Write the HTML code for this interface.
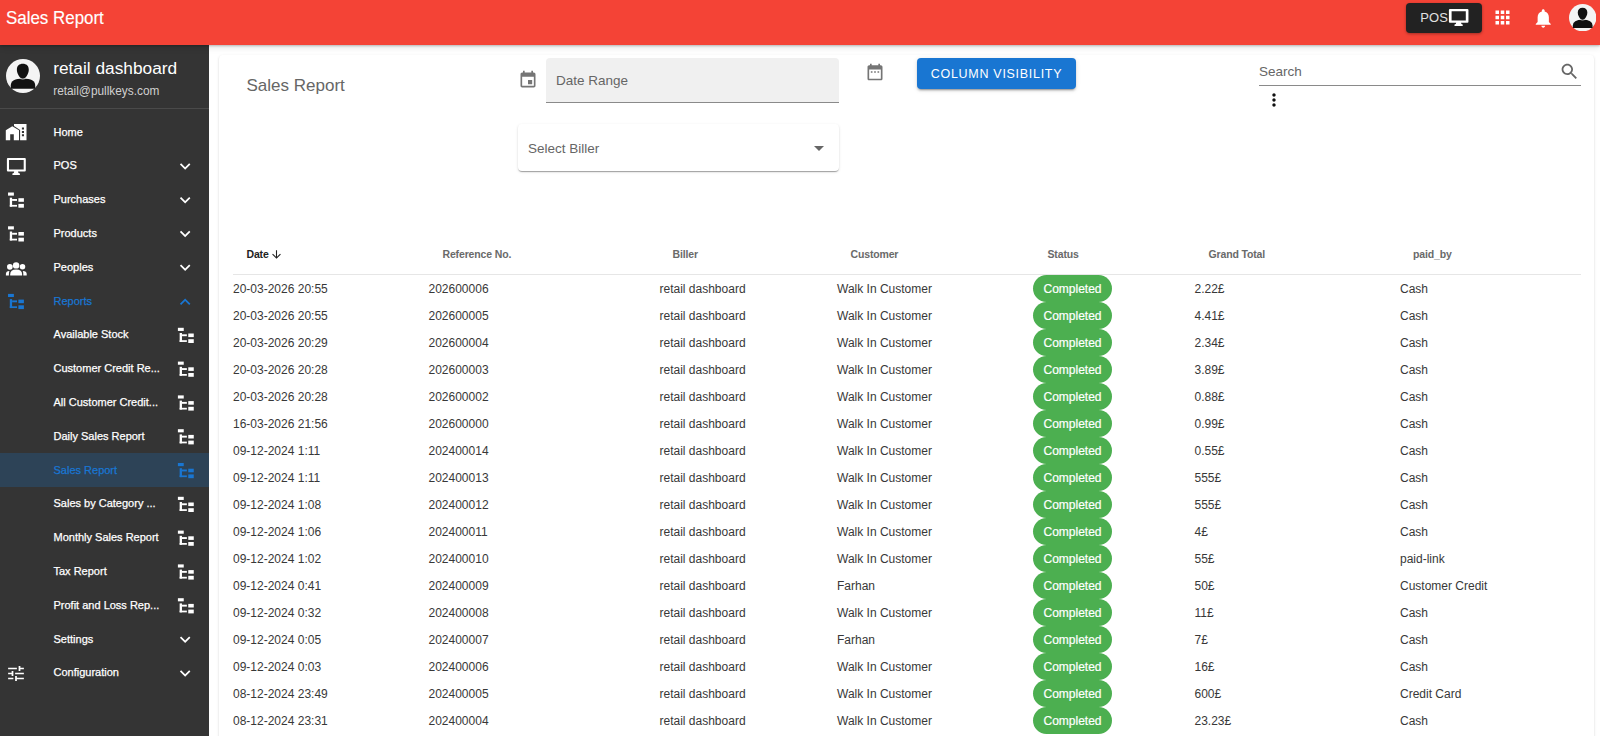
<!DOCTYPE html>
<html><head><meta charset="utf-8"><style>
*{box-sizing:border-box;}
html,body{margin:0;padding:0;}
body{width:1600px;height:736px;overflow:hidden;position:relative;background:#fff;font-family:"Liberation Sans",sans-serif;}
.abs{position:absolute;}
#top{position:absolute;left:0;top:0;width:1600px;height:44.5px;background:#f44336;z-index:5;box-shadow:0 1px 2px rgba(0,0,0,0.22),0 3px 6px rgba(0,0,0,0.1);}
#top .title{position:absolute;left:5.5px;top:1px;line-height:35px;font-size:18px;color:#fff;white-space:nowrap;transform:scaleX(0.94);transform-origin:0 0;-webkit-text-stroke:0.15px #fff;}
#posbtn{position:absolute;left:1405.5px;top:2.5px;width:76.5px;height:30.5px;background:#222;border-radius:4px;box-shadow:0 1px 3px rgba(0,0,0,0.35);}
#posbtn .t{position:absolute;left:14.8px;top:-3px;line-height:35px;font-size:13px;color:#e0e0e0;letter-spacing:0.1px;}
#side{position:absolute;left:0;top:44px;width:209px;height:692px;background:#343434;}
#paper{position:absolute;left:219px;top:55px;width:1375px;height:800px;background:#fff;border-radius:4px;box-shadow:0 2px 1px -1px rgba(0,0,0,0.2),0 1px 1px 0 rgba(0,0,0,0.14),0 1px 3px 0 rgba(0,0,0,0.12);}
.sel{position:absolute;left:0;width:209px;background:#2d4357;}
.lbl{position:absolute;left:53.5px;height:33.8px;line-height:33.8px;font-size:11px;color:#fff;white-space:nowrap;z-index:3;-webkit-text-stroke:0.25px #fff;}
.lbl.act{-webkit-text-stroke:0.25px #1976d2;}
.lbl.act{color:#1976d2;}
.row{position:absolute;left:0;width:1600px;height:27px;}
.row .c{position:absolute;top:0.6px;line-height:27px;font-size:12px;color:#383838;white-space:nowrap;}
.chip{position:absolute;left:1033px;top:0;width:79px;height:27px;border-radius:13.5px;background:#4caf50;color:#fff;font-size:12px;line-height:28.5px;text-align:center;-webkit-text-stroke:0.2px #fff;}
.hd{position:absolute;top:244px;line-height:21px;font-size:10.5px;font-weight:700;letter-spacing:-0.15px;color:#6a6a6a;white-space:nowrap;}
</style></head><body>
<div id="top">
  <div class="title">Sales Report</div>
  <div id="posbtn"><span class="t">POS</span>
    <svg class="abs" style="left:-1405.5px;top:-2.5px" width="1600" height="40" fill="#fff"><path fill-rule="evenodd" d="M1449.9 8.9 H1467.45 Q1468.45 8.9 1468.45 9.9 V21.8 Q1468.45 22.8 1467.45 22.8 H1449.9 Q1448.9 22.8 1448.9 21.8 V9.9 Q1448.9 8.9 1449.9 8.9z M1451.6 11.3 V20.5 H1465.8 V11.3z M1456.2 22.8 H1461 Q1461 24.5 1462.7 24.5 V25.9 H1454.5 V24.5 Q1456.2 24.5 1456.2 22.8z"/></svg>
  </div>
  <svg class="abs" style="left:1492px;top:7.4px" width="21" height="21" viewBox="0 0 24 24" fill="#fff"><path d="M4 8h4V4H4v4zm6 12h4v-4h-4v4zm-6 0h4v-4H4v4zm0-6h4v-4H4v4zm6 0h4v-4h-4v4zm6-10v4h4V4h-4zm-6 4h4V4h-4v4zm6 6h4v-4h-4v4zm0 6h4v-4h-4v4z"/></svg>
  <svg class="abs" style="left:1531.8px;top:6.6px" width="22.5" height="22.5" viewBox="0 0 24 24" fill="#fff"><path d="M12 22c1.1 0 2-.9 2-2h-4c0 1.1.89 2 2 2zm6-6v-5c0-3.07-1.64-5.64-4.5-6.32V4c0-.83-.67-1.5-1.5-1.5s-1.5.67-1.5 1.5v.68C7.63 5.36 6 7.92 6 11v5l-2 2v1h16v-1l-2-2z"/></svg>
  <svg class="abs" style="left:1568.7px;top:3.7px" width="27.4" height="27.4" viewBox="0 0 100 100"><circle cx="50" cy="50" r="50" fill="#f4f4f4"/><g fill="#111"><path d="M49.5 14 C60 14 67 20 67 31 C67 37 65.5 42 63 46 C60 52 56 57.5 49.5 57.5 C43 57.5 39 52 36 46 C33.5 42 32 37 32 31 C32 20 39 14 49.5 14z"/><path d="M14 87.4 V78.5 Q14 57.5 50 57.5 Q86 57.5 86 78.5 V87.4z"/></g><path d="M42 57.8 Q49.5 61.5 57 57.8" stroke="#f4f4f4" stroke-width="1.6" fill="none"/></svg>
</div>
<div id="side">
  <svg class="abs" style="left:6px;top:15px" width="34" height="34" viewBox="0 0 100 100"><circle cx="50" cy="50" r="50" fill="#f4f4f4"/><g fill="#111"><path d="M49.5 14 C60 14 67 20 67 31 C67 37 65.5 42 63 46 C60 52 56 57.5 49.5 57.5 C43 57.5 39 52 36 46 C33.5 42 32 37 32 31 C32 20 39 14 49.5 14z"/><path d="M14 87.4 V78.5 Q14 57.5 50 57.5 Q86 57.5 86 78.5 V87.4z"/></g><path d="M42 57.8 Q49.5 61.5 57 57.8" stroke="#f4f4f4" stroke-width="1.6" fill="none"/></svg>
  <div class="abs" style="left:53.2px;top:14px;font-size:17.3px;line-height:20px;color:#fff;white-space:nowrap">retail dashboard</div>
  <div class="abs" style="left:53.2px;top:40px;font-size:11.85px;line-height:15px;color:#d0d0d0;white-space:nowrap">retail@pullkeys.com</div>
  <div class="abs" style="left:0;top:64px;width:209px;height:1px;background:#4a4a4a"></div>
</div>
<div class="sel" style="top:453.00px;height:33.8px;z-index:2"></div>
<svg class="abs" style="left:0;top:0;z-index:3" width="209" height="736" fill="#fff"><path d="M5.8 130.3 L12.27 126.3 L19.0 130.3 V140.2 H13.8 V134.3 H10.2 V140.2 H5.8z"/><path fill-rule="evenodd" d="M14 123.9 H26.5 V140.2 H20.1 V129.9 L14 126.0z M21.9 127.6 h2.1 v2 h-2.1z M21.9 131 h2.1 v2 h-2.1z M21.9 134.3 h2.1 v2 h-2.1z"/><path fill-rule="evenodd" d="M7.9 157.9 H24.8 Q25.8 157.9 25.8 158.9 V170.4 Q25.8 171.4 24.8 171.4 H7.9 Q6.9 171.4 6.9 170.4 V158.9 Q6.9 157.9 7.9 157.9z M9 160 V169.4 H23.7 V160z M14.2 171.4 H18 Q18 173.4 19.9 173.4 V175 H12.4 V173.4 Q14.2 173.4 14.2 171.4z"/><rect x="8.04" y="192.50" width="5.84" height="3.14"/><rect x="9.80" y="197.70" width="2.3" height="8.95"/><rect x="12.10" y="199.00" width="4.9" height="1.9"/><rect x="9.80" y="204.90" width="7.2" height="1.75"/><rect x="18.40" y="198.20" width="5.5" height="3.6"/><rect x="18.40" y="203.90" width="5.5" height="3.8"/><rect x="8.04" y="226.30" width="5.84" height="3.14"/><rect x="9.80" y="231.50" width="2.3" height="8.95"/><rect x="12.10" y="232.80" width="4.9" height="1.9"/><rect x="9.80" y="238.70" width="7.2" height="1.75"/><rect x="18.40" y="232.00" width="5.5" height="3.6"/><rect x="18.40" y="237.70" width="5.5" height="3.8"/><g fill="#1976d2"><rect x="8.04" y="293.90" width="5.84" height="3.14"/><rect x="9.80" y="299.10" width="2.3" height="8.95"/><rect x="12.10" y="300.40" width="4.9" height="1.9"/><rect x="9.80" y="306.30" width="7.2" height="1.75"/><rect x="18.40" y="299.60" width="5.5" height="3.6"/><rect x="18.40" y="305.30" width="5.5" height="3.8"/></g><g><rect x="177.90" y="327.80" width="5.84" height="3.14"/><rect x="179.66" y="333.00" width="2.3" height="8.95"/><rect x="181.96" y="334.30" width="4.9" height="1.9"/><rect x="179.66" y="340.20" width="7.2" height="1.75"/><rect x="188.26" y="333.50" width="5.5" height="3.6"/><rect x="188.26" y="339.20" width="5.5" height="3.8"/></g><g><rect x="177.90" y="361.60" width="5.84" height="3.14"/><rect x="179.66" y="366.80" width="2.3" height="8.95"/><rect x="181.96" y="368.10" width="4.9" height="1.9"/><rect x="179.66" y="374.00" width="7.2" height="1.75"/><rect x="188.26" y="367.30" width="5.5" height="3.6"/><rect x="188.26" y="373.00" width="5.5" height="3.8"/></g><g><rect x="177.90" y="395.40" width="5.84" height="3.14"/><rect x="179.66" y="400.60" width="2.3" height="8.95"/><rect x="181.96" y="401.90" width="4.9" height="1.9"/><rect x="179.66" y="407.80" width="7.2" height="1.75"/><rect x="188.26" y="401.10" width="5.5" height="3.6"/><rect x="188.26" y="406.80" width="5.5" height="3.8"/></g><g><rect x="177.90" y="429.20" width="5.84" height="3.14"/><rect x="179.66" y="434.40" width="2.3" height="8.95"/><rect x="181.96" y="435.70" width="4.9" height="1.9"/><rect x="179.66" y="441.60" width="7.2" height="1.75"/><rect x="188.26" y="434.90" width="5.5" height="3.6"/><rect x="188.26" y="440.60" width="5.5" height="3.8"/></g><g fill="#1976d2"><rect x="177.90" y="463.00" width="5.84" height="3.14"/><rect x="179.66" y="468.20" width="2.3" height="8.95"/><rect x="181.96" y="469.50" width="4.9" height="1.9"/><rect x="179.66" y="475.40" width="7.2" height="1.75"/><rect x="188.26" y="468.70" width="5.5" height="3.6"/><rect x="188.26" y="474.40" width="5.5" height="3.8"/></g><g><rect x="177.90" y="496.80" width="5.84" height="3.14"/><rect x="179.66" y="502.00" width="2.3" height="8.95"/><rect x="181.96" y="503.30" width="4.9" height="1.9"/><rect x="179.66" y="509.20" width="7.2" height="1.75"/><rect x="188.26" y="502.50" width="5.5" height="3.6"/><rect x="188.26" y="508.20" width="5.5" height="3.8"/></g><g><rect x="177.90" y="530.60" width="5.84" height="3.14"/><rect x="179.66" y="535.80" width="2.3" height="8.95"/><rect x="181.96" y="537.10" width="4.9" height="1.9"/><rect x="179.66" y="543.00" width="7.2" height="1.75"/><rect x="188.26" y="536.30" width="5.5" height="3.6"/><rect x="188.26" y="542.00" width="5.5" height="3.8"/></g><g><rect x="177.90" y="564.40" width="5.84" height="3.14"/><rect x="179.66" y="569.60" width="2.3" height="8.95"/><rect x="181.96" y="570.90" width="4.9" height="1.9"/><rect x="179.66" y="576.80" width="7.2" height="1.75"/><rect x="188.26" y="570.10" width="5.5" height="3.6"/><rect x="188.26" y="575.80" width="5.5" height="3.8"/></g><g><rect x="177.90" y="598.20" width="5.84" height="3.14"/><rect x="179.66" y="603.40" width="2.3" height="8.95"/><rect x="181.96" y="604.70" width="4.9" height="1.9"/><rect x="179.66" y="610.60" width="7.2" height="1.75"/><rect x="188.26" y="603.90" width="5.5" height="3.6"/><rect x="188.26" y="609.60" width="5.5" height="3.8"/></g><g transform="translate(0,250.90)"><circle cx="16.1" cy="14.5" r="3.2"/><circle cx="9.85" cy="15.9" r="2.85"/><circle cx="22.5" cy="15.9" r="2.75"/><path d="M10.2 24.6 V23.6 Q10.2 18.6 16.15 18.6 Q22.1 18.6 22.1 23.6 V24.6z"/><path d="M5.9 24.6 V22.8 Q5.9 20.2 9.4 20.0 Q8.9 21.4 8.9 23.2 V24.6z"/><path d="M23.3 24.6 V23.2 Q23.3 21.4 22.8 20.0 Q26.7 20.2 26.7 22.8 V24.6z"/></g><path transform="translate(5.5,663.50) scale(0.8750,0.8333)" d="M3 17v2h6v-2H3zM3 5v2h10V5H3zm10 16v-2h8v-2h-8v-2h-2v6h2zM7 9v2H3v2h4v2h2V9H7zm14 4v-2H11v2h10zm-6-4h2V7h4V5h-4V3h-2v6z"/><path fill="#fff" transform="translate(174.65,155.68) scale(0.8750)" d="M16.59 8.59 12 13.17 7.41 8.59 6 10l6 6 6-6z"/><path fill="#fff" transform="translate(174.65,189.48) scale(0.8750)" d="M16.59 8.59 12 13.17 7.41 8.59 6 10l6 6 6-6z"/><path fill="#fff" transform="translate(174.65,223.28) scale(0.8750)" d="M16.59 8.59 12 13.17 7.41 8.59 6 10l6 6 6-6z"/><path fill="#fff" transform="translate(174.65,257.08) scale(0.8750)" d="M16.59 8.59 12 13.17 7.41 8.59 6 10l6 6 6-6z"/><path fill="#1976d2" transform="translate(174.65,291.40) scale(0.8750)" d="M12 8l-6 6 1.41 1.41L12 10.83l4.59 4.58L18 14z"/><path fill="#fff" transform="translate(174.65,628.88) scale(0.8750)" d="M16.59 8.59 12 13.17 7.41 8.59 6 10l6 6 6-6z"/><path fill="#fff" transform="translate(174.65,662.68) scale(0.8750)" d="M16.59 8.59 12 13.17 7.41 8.59 6 10l6 6 6-6z"/></svg>
<div class="abs" style="left:0;top:0;width:209px;height:736px;z-index:3">
<div class="lbl" style="top:115.60px">Home</div>
<div class="lbl" style="top:149.40px">POS</div>
<div class="lbl" style="top:183.20px">Purchases</div>
<div class="lbl" style="top:217.00px">Products</div>
<div class="lbl" style="top:250.80px">Peoples</div>
<div class="lbl act" style="top:284.60px">Reports</div>
<div class="lbl" style="top:318.40px">Available Stock</div>
<div class="lbl" style="top:352.20px">Customer Credit Re...</div>
<div class="lbl" style="top:386.00px">All Customer Credit...</div>
<div class="lbl" style="top:419.80px">Daily Sales Report</div>
<div class="lbl act" style="top:453.60px">Sales Report</div>
<div class="lbl" style="top:487.40px">Sales by Category ...</div>
<div class="lbl" style="top:521.20px">Monthly Sales Report</div>
<div class="lbl" style="top:555.00px">Tax Report</div>
<div class="lbl" style="top:588.80px">Profit and Loss Rep...</div>
<div class="lbl" style="top:622.60px">Settings</div>
<div class="lbl" style="top:656.40px">Configuration</div>
</div>
<div id="paper"></div>
<div class="abs" style="left:0;top:0;width:1600px;height:736px;z-index:2">
  <div class="abs" style="left:246.5px;top:74.5px;font-size:17px;line-height:22px;color:#666;white-space:nowrap">Sales Report</div>
  <svg class="abs" style="left:517.7px;top:70.1px" width="20" height="20" viewBox="0 0 24 24" fill="#757575"><path d="M17 12h-5v5h5v-5zM16 1v2H8V1H6v2H5c-1.11 0-1.99.9-1.99 2L3 19c0 1.1.89 2 2 2h14c1.1 0 2-.9 2-2V5c0-1.1-.9-2-2-2h-1V1h-2zm3 18H5V8h14v11z"/></svg>
  <div class="abs" style="left:545.75px;top:58.25px;width:293.5px;height:44.25px;background:#f0f0f0;border-radius:4px 4px 0 0;border-bottom:1px solid #8a8a8a"></div>
  <div class="abs" style="left:556px;top:70.5px;font-size:13.5px;line-height:20px;color:#666;white-space:nowrap">Date Range</div>
  <div class="abs" style="left:518px;top:123.75px;width:321.25px;height:47.5px;background:#fff;border-radius:4px;box-shadow:0 2px 1px -1px rgba(0,0,0,0.2),0 1px 1px 0 rgba(0,0,0,0.14),0 1px 3px 0 rgba(0,0,0,0.12)"></div>
  <div class="abs" style="left:528px;top:138.6px;font-size:13.5px;line-height:20px;color:#666;white-space:nowrap">Select Biller</div>
  <svg class="abs" style="left:807px;top:136px" width="24" height="24" viewBox="0 0 24 24" fill="#666"><path d="M7 10l5 5 5-5z"/></svg>
  <svg class="abs" style="left:865px;top:62.4px" width="20" height="20" viewBox="0 0 24 24" fill="#757575"><path d="M9 11H7v2h2v-2zm4 0h-2v2h2v-2zm4 0h-2v2h2v-2zm2-7h-1V2h-2v2H8V2H6v2H5c-1.11 0-1.99.9-1.99 2L3 20c0 1.1.89 2 2 2h14c1.1 0 2-.9 2-2V6c0-1.1-.9-2-2-2zm0 16H5V9h14v11z"/></svg>
  <div class="abs" style="left:917px;top:58px;width:159px;height:31px;background:#1976d2;border-radius:4px;box-shadow:0 3px 1px -2px rgba(0,0,0,0.2),0 2px 2px 0 rgba(0,0,0,0.14),0 1px 5px 0 rgba(0,0,0,0.12);color:#fff;font-size:12.5px;line-height:32.5px;letter-spacing:0.7px;text-align:center;white-space:nowrap">COLUMN VISIBILITY</div>
  <div class="abs" style="left:1259px;top:61.5px;font-size:13.5px;line-height:20px;color:#666;white-space:nowrap">Search</div>
  <svg class="abs" style="left:1559px;top:60.5px" width="21" height="21" viewBox="0 0 24 24" fill="#666"><path d="M15.5 14h-.79l-.28-.27C15.41 12.59 16 11.11 16 9.5 16 5.91 13.09 3 9.5 3S3 5.91 3 9.5 5.91 16 9.5 16c1.61 0 3.09-.59 4.23-1.57l.27.28v.79l5 4.99L20.49 19l-4.99-5zm-6 0C7.01 14 5 11.99 5 9.5S7.01 5 9.5 5 14 7.01 14 9.5 11.99 14 9.5 14z"/></svg>
  <div class="abs" style="left:1259px;top:85px;width:322px;height:1px;background:#8a8a8a"></div>
  <svg class="abs" style="left:1264.1px;top:90.3px" width="20" height="20" viewBox="0 0 24 24" fill="#111"><path d="M12 8c1.1 0 2-.9 2-2s-.9-2-2-2-2 .9-2 2 .9 2 2 2zm0 2c-1.1 0-2 .9-2 2s.9 2 2 2 2-.9 2-2-.9-2-2-2zm0 6c-1.1 0-2 .9-2 2s.9 2 2 2 2-.9 2-2-.9-2-2-2z"/></svg>
  <div class="hd" style="left:246.5px;color:#222">Date</div>
  <svg class="abs" style="left:269.5px;top:248px" width="13" height="13" viewBox="0 0 24 24" fill="#222"><path d="M20 12l-1.41-1.41L13 16.17V4h-2v12.17l-5.58-5.59L4 12l8 8 8-8z"/></svg>
  <div class="hd" style="left:442.5px">Reference No.</div>
  <div class="hd" style="left:672.5px">Biller</div>
  <div class="hd" style="left:850.5px">Customer</div>
  <div class="hd" style="left:1047.5px">Status</div>
  <div class="hd" style="left:1208.5px">Grand Total</div>
  <div class="hd" style="left:1413px">paid_by</div>
  <div class="abs" style="left:232.5px;top:274px;width:1348px;height:1px;background:#e6e6e6"></div>
<div class="row" style="top:275.0px"><span class="c" style="left:233px">20-03-2026 20:55</span><span class="c" style="left:428.5px">202600006</span><span class="c" style="left:659.5px">retail dashboard</span><span class="c" style="left:837px">Walk In Customer</span><span class="chip">Completed</span><span class="c" style="left:1194.5px">2.22£</span><span class="c" style="left:1400px">Cash</span></div>
<div class="row" style="top:302.0px"><span class="c" style="left:233px">20-03-2026 20:55</span><span class="c" style="left:428.5px">202600005</span><span class="c" style="left:659.5px">retail dashboard</span><span class="c" style="left:837px">Walk In Customer</span><span class="chip">Completed</span><span class="c" style="left:1194.5px">4.41£</span><span class="c" style="left:1400px">Cash</span></div>
<div class="row" style="top:329.0px"><span class="c" style="left:233px">20-03-2026 20:29</span><span class="c" style="left:428.5px">202600004</span><span class="c" style="left:659.5px">retail dashboard</span><span class="c" style="left:837px">Walk In Customer</span><span class="chip">Completed</span><span class="c" style="left:1194.5px">2.34£</span><span class="c" style="left:1400px">Cash</span></div>
<div class="row" style="top:356.0px"><span class="c" style="left:233px">20-03-2026 20:28</span><span class="c" style="left:428.5px">202600003</span><span class="c" style="left:659.5px">retail dashboard</span><span class="c" style="left:837px">Walk In Customer</span><span class="chip">Completed</span><span class="c" style="left:1194.5px">3.89£</span><span class="c" style="left:1400px">Cash</span></div>
<div class="row" style="top:383.0px"><span class="c" style="left:233px">20-03-2026 20:28</span><span class="c" style="left:428.5px">202600002</span><span class="c" style="left:659.5px">retail dashboard</span><span class="c" style="left:837px">Walk In Customer</span><span class="chip">Completed</span><span class="c" style="left:1194.5px">0.88£</span><span class="c" style="left:1400px">Cash</span></div>
<div class="row" style="top:410.0px"><span class="c" style="left:233px">16-03-2026 21:56</span><span class="c" style="left:428.5px">202600000</span><span class="c" style="left:659.5px">retail dashboard</span><span class="c" style="left:837px">Walk In Customer</span><span class="chip">Completed</span><span class="c" style="left:1194.5px">0.99£</span><span class="c" style="left:1400px">Cash</span></div>
<div class="row" style="top:437.0px"><span class="c" style="left:233px">09-12-2024 1:11</span><span class="c" style="left:428.5px">202400014</span><span class="c" style="left:659.5px">retail dashboard</span><span class="c" style="left:837px">Walk In Customer</span><span class="chip">Completed</span><span class="c" style="left:1194.5px">0.55£</span><span class="c" style="left:1400px">Cash</span></div>
<div class="row" style="top:464.0px"><span class="c" style="left:233px">09-12-2024 1:11</span><span class="c" style="left:428.5px">202400013</span><span class="c" style="left:659.5px">retail dashboard</span><span class="c" style="left:837px">Walk In Customer</span><span class="chip">Completed</span><span class="c" style="left:1194.5px">555£</span><span class="c" style="left:1400px">Cash</span></div>
<div class="row" style="top:491.0px"><span class="c" style="left:233px">09-12-2024 1:08</span><span class="c" style="left:428.5px">202400012</span><span class="c" style="left:659.5px">retail dashboard</span><span class="c" style="left:837px">Walk In Customer</span><span class="chip">Completed</span><span class="c" style="left:1194.5px">555£</span><span class="c" style="left:1400px">Cash</span></div>
<div class="row" style="top:518.0px"><span class="c" style="left:233px">09-12-2024 1:06</span><span class="c" style="left:428.5px">202400011</span><span class="c" style="left:659.5px">retail dashboard</span><span class="c" style="left:837px">Walk In Customer</span><span class="chip">Completed</span><span class="c" style="left:1194.5px">4£</span><span class="c" style="left:1400px">Cash</span></div>
<div class="row" style="top:545.0px"><span class="c" style="left:233px">09-12-2024 1:02</span><span class="c" style="left:428.5px">202400010</span><span class="c" style="left:659.5px">retail dashboard</span><span class="c" style="left:837px">Walk In Customer</span><span class="chip">Completed</span><span class="c" style="left:1194.5px">55£</span><span class="c" style="left:1400px">paid-link</span></div>
<div class="row" style="top:572.0px"><span class="c" style="left:233px">09-12-2024 0:41</span><span class="c" style="left:428.5px">202400009</span><span class="c" style="left:659.5px">retail dashboard</span><span class="c" style="left:837px">Farhan</span><span class="chip">Completed</span><span class="c" style="left:1194.5px">50£</span><span class="c" style="left:1400px">Customer Credit</span></div>
<div class="row" style="top:599.0px"><span class="c" style="left:233px">09-12-2024 0:32</span><span class="c" style="left:428.5px">202400008</span><span class="c" style="left:659.5px">retail dashboard</span><span class="c" style="left:837px">Walk In Customer</span><span class="chip">Completed</span><span class="c" style="left:1194.5px">11£</span><span class="c" style="left:1400px">Cash</span></div>
<div class="row" style="top:626.0px"><span class="c" style="left:233px">09-12-2024 0:05</span><span class="c" style="left:428.5px">202400007</span><span class="c" style="left:659.5px">retail dashboard</span><span class="c" style="left:837px">Farhan</span><span class="chip">Completed</span><span class="c" style="left:1194.5px">7£</span><span class="c" style="left:1400px">Cash</span></div>
<div class="row" style="top:653.0px"><span class="c" style="left:233px">09-12-2024 0:03</span><span class="c" style="left:428.5px">202400006</span><span class="c" style="left:659.5px">retail dashboard</span><span class="c" style="left:837px">Walk In Customer</span><span class="chip">Completed</span><span class="c" style="left:1194.5px">16£</span><span class="c" style="left:1400px">Cash</span></div>
<div class="row" style="top:680.0px"><span class="c" style="left:233px">08-12-2024 23:49</span><span class="c" style="left:428.5px">202400005</span><span class="c" style="left:659.5px">retail dashboard</span><span class="c" style="left:837px">Walk In Customer</span><span class="chip">Completed</span><span class="c" style="left:1194.5px">600£</span><span class="c" style="left:1400px">Credit Card</span></div>
<div class="row" style="top:707.0px"><span class="c" style="left:233px">08-12-2024 23:31</span><span class="c" style="left:428.5px">202400004</span><span class="c" style="left:659.5px">retail dashboard</span><span class="c" style="left:837px">Walk In Customer</span><span class="chip">Completed</span><span class="c" style="left:1194.5px">23.23£</span><span class="c" style="left:1400px">Cash</span></div>
</div>
</body></html>
